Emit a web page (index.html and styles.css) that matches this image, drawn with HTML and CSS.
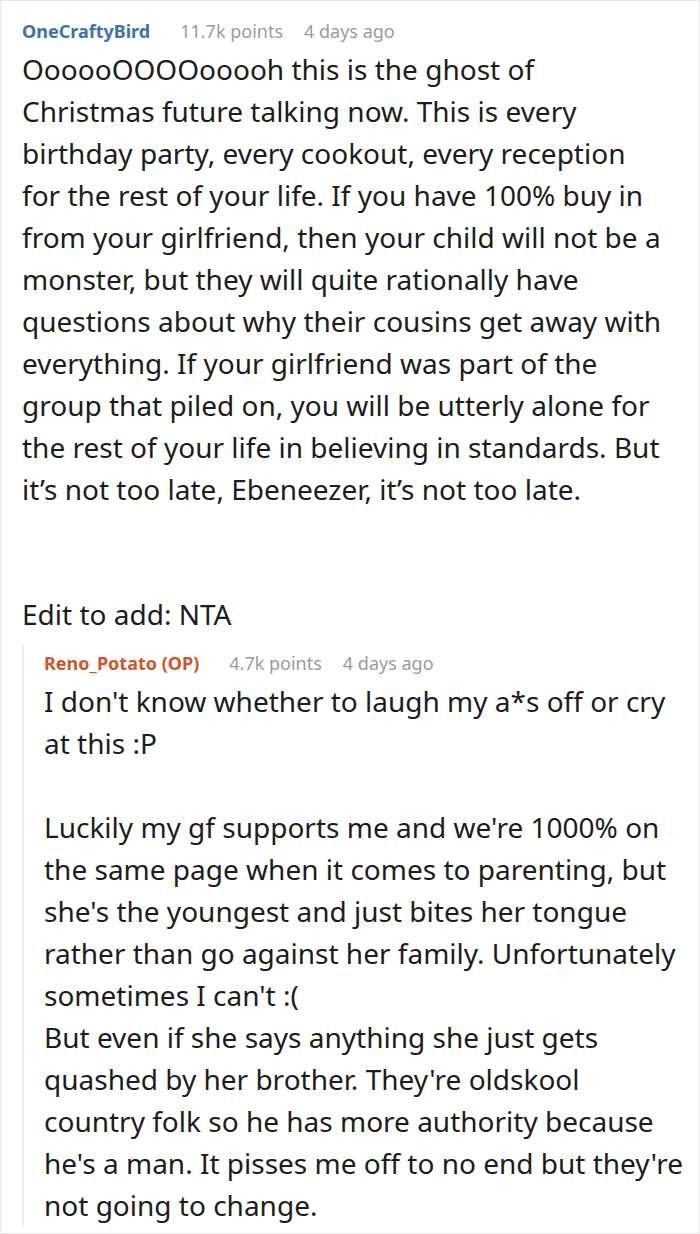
FILE: index.html
```html
<!DOCTYPE html>
<html>
<head>
<meta charset="utf-8">
<link rel="stylesheet" href="styles.css">
</head>
<body>
<div class="frame">
  <div class="comment">
    <div class="meta">
      <span class="user">OneCraftyBird</span>
      <span class="info">11.7k points</span>
      <span class="info">4 days ago</span>
    </div>
    <div class="text main">
      <p>OooooOOOOooooh this is the ghost of Christmas future talking now. This is every birthday party, every cookout, every reception for the rest of your life. If you have 100% buy in from your girlfriend, then your child will not be a monster, but they will quite rationally have questions about why their cousins get away with everything. If your girlfriend was part of the group that piled on, you will be utterly alone for the rest of your life in believing in standards. But it’s not too late, Ebeneezer, it’s not too late.</p>
      <p class="edit">Edit to add: NTA</p>
    </div>
    <div class="reply">
      <div class="meta">
        <span class="user op">Reno_Potato (OP)</span>
        <span class="info">4.7k points</span>
        <span class="info">4 days ago</span>
      </div>
      <div class="text">
        <p>I don't know whether to laugh my a*s off or cry at this :P</p>
        <p>Luckily my gf supports me and we're 1000% on the same page when it comes to parenting, but she's the youngest and just bites her tongue rather than go against her family. Unfortunately sometimes I can't :(<br>But even if she says anything she just gets quashed by her brother. They're oldskool country folk so he has more authority because he's a man. It pisses me off to no end but they're not going to change.</p>
      </div>
    </div>
  </div>
</div>
</body>
</html>
```
FILE: styles.css
```css
html, body {
  margin: 0;
  padding: 0;
  background: #ffffff;
}
.frame {
  width: 698px;
  height: 1232px;
  border: 1px solid #e8e8e8;
  overflow: hidden;
  font-family: "Noto Sans", "Open Sans", sans-serif;
}
.comment {
  padding: 17px 16px 0 21px;
}
.meta {
  display: flex;
  gap: 21px;
  font-size: 18px;
  line-height: 26px;
  height: 26px;
  align-items: center;
}
.user {
  font-weight: bold;
  color: #3f70b3;
  margin-right: 9px;
}
.user.op {
  color: #d0562a;
}
.info {
  color: #9b9b9b;
}
.text {
  font-size: 28px;
  line-height: 42px;
  color: #1c1c1c;
}
.text p {
  margin: 0 0 42px 0;
}
.text.main {
  margin-top: 4px;
  max-width: 642px;
}
.text.main p.edit {
  margin-top: 83px;
  margin-bottom: 0;
}
.reply {
  border-left: 2px solid #ececec;
  margin-top: 10px;
  padding: 0 0 0 20px;
}
.reply .meta {
  padding-top: 5px;
}
.reply .text {
  margin-top: 4px;
}
.reply .text p:last-child {
  margin-bottom: 0;
}
```
